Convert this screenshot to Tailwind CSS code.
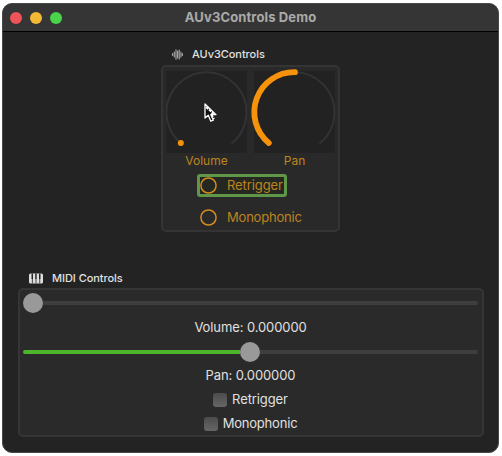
<!DOCTYPE html>
<html lang="en">
<head>
<meta charset="utf-8">
<title>AUv3Controls Demo</title>
<script src="https://cdn.jsdelivr.net/npm/@tailwindcss/browser@4"></script>
</head>
<body class="h-[456px] w-[502px] overflow-hidden bg-white pt-[3px] pl-[2px] font-['Inter','Liberation_Sans',sans-serif] text-[13px] text-[#e0e0e0]">
<main class="flex h-[450px] w-[497px] flex-col overflow-hidden rounded-[10px] border border-[#484848] bg-[#232323]">
  <header class="grid h-[28px] shrink-0 grid-cols-[62px_1fr_62px] items-center border-b border-black bg-[#353535]">
    <div class="flex gap-2 pl-[7px]">
      <i class="size-3 rounded-full bg-[#ed5359]"></i><i class="size-3 rounded-full bg-[#f3b935]"></i><i class="size-3 rounded-full bg-[#49d44a]"></i>
    </div>
    <h1 class="text-center text-[13px] font-bold tracking-[0.12px] text-[#aaa]">AUv3Controls Demo</h1>
  </header>

  <section class="ml-[158px] w-[179px] pt-[12px]">
    <div class="flex h-5 items-center gap-[9px] pt-px pl-[11px]">
      <svg class="size-[11px]" viewBox="0 0 11 11" fill="none" stroke="#aaa" stroke-width="1.1" stroke-linecap="round"><path d="M.6 4.5v2M2.3 3v5M4 .7v9.6M5.6 2v7M7.2 1v9M8.9 3v5M10.4 4.5v2"/></svg>
      <h2 class="text-[11px] font-medium tracking-[-0.05px]">AUv3Controls</h2>
    </div>
    <div class="mt-px h-[167px] rounded-[5px] border-2 border-[#343434] bg-[#292929] px-[3px] pt-[4px]">
      <div class="flex gap-[7px] text-center text-[12px] text-[#bd851f]">
        <div class="w-[81px]">
          <svg class="block h-[82px] w-[81px] bg-[#222]" viewBox="0 0 81 82" fill="none" stroke-linecap="round"><path d="M14.8 72A40 40 0 1 1 66.2 72" stroke="#333" stroke-width="2"/><circle cx="14.8" cy="72" r="3" fill="#f7930a"/></svg>
          <div class="h-[15px] leading-[15px]">Volume</div>
        </div>
        <div class="w-[81px]">
          <svg class="block h-[82px] w-[81px] overflow-visible bg-[#222]" viewBox="0 0 81 82" fill="none" stroke-linecap="round"><path d="M14.8 72A40 40 0 1 1 66.2 72" stroke="#333" stroke-width="2"/><path d="M14.8 72A40 40 0 0 1 41 1.2" stroke="#f7930a" stroke-width="5.8"/></svg>
          <div class="h-[15px] leading-[15px]">Pan</div>
        </div>
      </div>
      <div class="ml-[31px] mt-[6px] flex flex-col gap-[9px] text-[#bd851f]">
        <div class="flex h-[23px] w-[90px] items-center gap-[10px] rounded-[3px] border-3 border-[#5f9648] bg-[#252721]">
          <svg class="size-[17px] shrink-0" viewBox="0 0 17 17"><circle cx="8.5" cy="8.5" r="7.6" fill="none" stroke="#d38b20" stroke-width="1.5"/></svg><span class="tracking-[-0.1px]">Retrigger</span>
        </div>
        <div class="flex h-[23px] items-center gap-[10px] pl-[3px]">
          <svg class="size-[17px] shrink-0" viewBox="0 0 17 17"><circle cx="8.5" cy="8.5" r="7.6" fill="none" stroke="#d38b20" stroke-width="1.5"/></svg><span class="tracking-[-0.2px]">Monophonic</span>
        </div>
      </div>
    </div>
  </section>

  <section class="ml-[15px] mt-[36px] w-[466px]">
    <div class="flex h-5 items-center gap-[9px] pl-[11px]">
      <svg class="h-[11px] w-[14px]" viewBox="0 0 14 11"><rect y=".5" width="14" height="10" rx="1.5" fill="#dedede"/><path d="M2.5.5H4V6H2.5zM6.2.5h1.5V6H6.2zM10 .5h1.5V6H10zM2.9 6h.8v4.5h-.8zM6.6 6h.8v4.5h-.8zM10.4 6h.8v4.5h-.8z" fill="#252525"/></svg>
      <h2 class="text-[11px] font-medium tracking-[-0.05px]">MIDI Controls</h2>
    </div>
    <div class="flex h-[149px] flex-col items-center rounded-[5px] border-2 border-[#353535] bg-[#2a2a2a] pt-px pr-px">
      <div class="flex h-[25px] w-[455px] items-center">
        <i class="size-5 rounded-full bg-[#999]"></i><i class="h-1 flex-1 rounded-r-full bg-[#3e3e3e]"></i>
      </div>
      <div class="h-6 leading-6 tracking-[-0.1px]">Volume: 0.000000</div>
      <div class="flex h-[25px] w-[455px] items-center pt-px">
        <i class="h-1 w-[217px] rounded-l-full bg-[#4db42c]"></i><i class="size-5 rounded-full bg-[#999]"></i><i class="h-1 flex-1 rounded-r-full bg-[#3e3e3e]"></i>
      </div>
      <div class="h-6 leading-6 tracking-[-0.1px]">Pan: 0.000000</div>
      <div class="flex h-[25px] items-center gap-[5px]"><i class="size-[14px] rounded-[3px] bg-linear-to-b from-[#4c4c4c] to-[#666]"></i><span class="tracking-[-0.1px]">Retrigger</span></div>
      <div class="flex h-6 items-center gap-[5px] pt-px"><i class="size-[14px] rounded-[3px] bg-linear-to-b from-[#4c4c4c] to-[#666]"></i><span class="tracking-[-0.2px]">Monophonic</span></div>
    </div>
  </section>
</main>
<svg class="absolute left-[204px] top-[103px] h-[22px] w-[14px]" viewBox="0 0 14 22" stroke-linejoin="round"><path d="M1 1v14l3.3-2.8 2.5 6 2.5-1-2.4-5.6H12z" fill="#111" stroke="#fff" stroke-width="1.3"/><path d="M2 4l7 6-2 1 3 5" fill="none" stroke="#fff" stroke-width="2" stroke-dasharray="3 1"/></svg>
</body>
</html>
